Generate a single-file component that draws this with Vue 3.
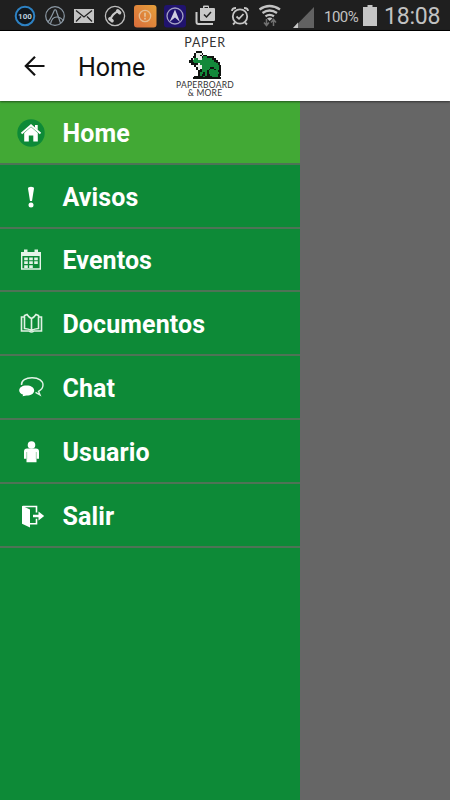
<script setup>
import { ref } from "vue"

const active = ref('home')

const items = [
  { id: 'home', label: 'Home' },
  { id: 'avisos', label: 'Avisos' },
  { id: 'eventos', label: 'Eventos' },
  { id: 'documentos', label: 'Documentos' },
  { id: 'chat', label: 'Chat' },
  { id: 'usuario', label: 'Usuario' },
  { id: 'salir', label: 'Salir' },
]

// k = black, g = green, w = white
const frog = [
  '....kkk............',
  '...kwwwk...........',
  '...kwwkwkk.........',
  '..kkwwwkggkkkk.....',
  '.kwggwwggggggkk....',
  'kkggggggggggggkk...',
  'kkkggggggggggggkk..',
  '.kkkkwggggggggggk..',
  '...kwwwggggggggggk.',
  '....kwwgggggkkgggk.',
  '....kwkggggkggkggk.',
  '.....kkgggkgggggkk.',
  '.....kggkgkggggggk.',
  '.....kgkkgkkggggkk.',
  '...kkkkkgkkkkgggk..',
  '..kkkkkkkkkkkkkkkk.',
]

const colors = { k: '#101410', g: '#13893a', w: '#e9efe9' }

const pixels = []
frog.forEach((row, y) => {
  row.split('').forEach((c, x) => {
    if(colors[c]) {
      pixels.push({ x, y, fill: colors[c] })
    }
  })
})
</script>

<template>
  <div class="screen">
    <div class="status">
      <svg class="status-icons" width="314" height="32" viewBox="0 0 314 32">
        <circle cx="25" cy="16" r="9.3" fill="#10171d" stroke="#2d82c4" stroke-width="2" />
        <text x="25" y="19" class="hundred" text-anchor="middle">100</text>

        <g fill="none" stroke="#8c99a5" stroke-width="1.2">
          <circle cx="55" cy="16" r="9.3" />
          <path d="M47.5 22c3-2 5-8 7-12 1.5-1 2 1 2.5 3l3.5 10M50.5 24c1-5 3-7 6-7s5 1 7 4" />
        </g>

        <path fill="#c4c4c4" d="M74 9h20v14H74z" />
        <path fill="none" stroke="#222" stroke-width="1.3" d="M76 10.500l8 6.500 8-6.500M76 21.500l5-5M92 21.500l-5-5" />

        <circle cx="115" cy="16" r="9.6" fill="none" stroke="#bdbdbd" stroke-width="1.3" />
        <path fill="none" stroke="#c9c9c9" stroke-width="2.2" d="M110.5 20.500c0-4 4-8.500 8.500-9" />
        <path stroke="#c9c9c9" stroke-width="3.4" stroke-linecap="round" d="M117.7 10.700l2 2M109.800 18.800l2.300 2" />

        <defs>
          <linearGradient id="orange" x1="0" y1="1" x2="1" y2="0">
            <stop offset="0" stop-color="#d96c3b" />
            <stop offset="1" stop-color="#e6a03b" />
          </linearGradient>
        </defs>
        <rect x="134" y="5" width="22.5" height="22.5" rx="3" fill="url(#orange)" />
        <circle cx="145" cy="16" r="5.7" fill="none" stroke="#e5bd93" stroke-width="1.3" />
        <path stroke="#e5bd93" stroke-width="1.8" d="M145 12.800v4M145 17.800v1.700" />

        <rect x="164" y="5" width="22" height="22.5" rx="3" fill="#20136e" />
        <circle cx="175" cy="16" r="8" fill="none" stroke="#a4a1c4" stroke-width="1.3" />
        <path fill="#cfcde0" d="M175 9.500l5 12.500-5-4.500-5.500 4.500z" />

        <path fill="#c9c9c9" fill-rule="evenodd" d="M200 8h3V6.500q0-1 1-1h4q1 0 1 1V8h5q1 0 1 1v11q0 1-1 1h-13q-1 0-1-1zM204.500 8h3.500V7h-3.500z" />
        <path fill="none" stroke="#c9c9c9" stroke-width="2" d="M196.500 12v10q0 2 2 2H213" />
        <path fill="none" stroke="#222" stroke-width="1.5" d="M204 14.500l2.500 2.500 4.500-5" />

        <g fill="none" stroke="#c6c6c6" stroke-width="1.8">
          <circle cx="240" cy="16.5" r="7.2" />
          <path d="M232 11q0-3 4-3M248 11q0-3-4-3M235 22.500l-2 2M245 22.500l2 2" />
          <path d="M236.500 16.500l2.500 2.300 4.500-4.800" />
        </g>

        <g fill="none" stroke="#c3c3c3" stroke-width="2.3">
          <path d="M259.500 9.500q10-7 20.500 0" />
          <path d="M262.500 13q7-5 14.500 0" />
          <path d="M265.500 16.300q4-3 8.500 0" />
        </g>
        <path fill="#c3c3c3" d="M267 18.300q3-1.800 5.500 0L269.700 21z" />
        <path fill="none" stroke="#707070" stroke-width="1.5" d="M266.500 19v6M264 22.500l2.500 3 2.500-3M273.500 26v-6M271 22.500l2.500-3 2.500 3" />

        <path fill="#626262" d="M314 7v21h-20.500z" />
        <path fill="#c8c8c8" d="M298 22.500V28h-5z" />
      </svg>
      <span class="percent">100%</span>
      <svg class="battery" width="14" height="22" viewBox="0 0 14 22">
        <path fill="#c5c5c5" d="M4.500 0h5v2H14v19H0V2h4.500z" />
      </svg>
      <span class="clock">18:08</span>
    </div>

    <header class="bar">
      <svg class="back" width="22" height="20" viewBox="0 0 22 20">
        <path fill="none" stroke="#111" stroke-width="2.2" d="M20.500 10H2M11 .8L1.800 10l9.200 9.200" />
      </svg>
      <h1>Home</h1>
      <div class="logo">
        <span class="logo-top">PAPER</span>
        <svg width="34" height="28" viewBox="0 0 19 16" preserveAspectRatio="none" shape-rendering="crispEdges">
          <rect v-for="(p, ix) in pixels" :key="ix" :x="p.x" :y="p.y" width="1.1" height="1.1" :fill="p.fill" />
        </svg>
        <span class="logo-text">PAPERBOARD</span>
        <span class="logo-text">&amp; MORE</span>
      </div>
    </header>

    <main>
      <nav>
        <a v-for="item in items" :key="item.id" :class="{ active: active === item.id }" @click="active = item.id">
          <svg class="icon" width="30" height="30" viewBox="0 0 30 30">
            <g v-if="item.id === 'home'">
              <circle cx="15" cy="15" r="13.7" fill="#0d8a37" />
              <path fill="none" stroke="#fff" stroke-width="1.9" d="M5.500 15.500L15 7.200l9.500 8.300" />
              <path fill="#fff" d="M19 7h2.700v5L19 9.500zM15 9l6.800 6V23.500h-4.500V17.500h-4.500v6H8.200v-8.500z" />
            </g>
            <g v-else-if="item.id === 'avisos'" fill="#fff">
              <path d="M12 6.500q0-1.700 3-1.700t3 1.700l-2 12.500h-2z" />
              <circle cx="15" cy="23" r="2.5" />
            </g>
            <g v-else-if="item.id === 'eventos'">
              <path fill="none" stroke="#e4f4e8" stroke-width="1.4" d="M5.700 8h18.600v16H5.700z" />
              <path fill="#e4f4e8" d="M5 7h20v4H5zM8 4.500h3.500v4H8zM18.500 4.500H22v4h-3.500z" />
              <path fill="none" stroke="#e4f4e8" stroke-width="2.7" stroke-dasharray="3.6 1.4" d="M8.200 13.800h13.700M8.200 17.700h13.700M8.200 21.600h8.700" />
            </g>
            <g v-else-if="item.id === 'documentos'" fill="none" stroke="#e0f2e4" stroke-width="1.6">
              <path d="M15.500 21.500V9.500q-2.500-1-4.500-4L8.500 6.500v13q4 .3 7 2 3-1.700 7-2v-13L20 5.500q-2 3-4.500 4" />
              <path d="M8 8H5.500v14h7.500q2.500 2 5 0h7.500V8H23" />
            </g>
            <g v-else-if="item.id === 'chat'">
              <path fill="none" stroke="#e4f4e8" stroke-width="1.4" d="M5.500 12C5 7.500 10 4.700 16 4.700c7 0 11 3.300 11 7.300 0 3-2 5-4.500 6.300l1.500 3.500-4.500-2.500" />
              <path fill="#fff" d="M10.500 12.500c4.500 0 7.700 2 7.700 5s-3.200 5-7.700 5l-4 .8.700-1.600c-2.500-1-4-2.200-4-4.200 0-3 3-5 7.300-5z" />
            </g>
            <g v-else-if="item.id === 'usuario'" fill="#fff">
              <circle cx="15.5" cy="8" r="3.8" />
              <path d="M11 11.500h9q3 0 3 3v7.200h-2.500v3.500h-10v-3.500H8v-7.200q0-3 3-3z" />
              <path stroke="#7cc38e" stroke-width=".7" d="M10.700 15v7M20.300 15v7" />
            </g>
            <g v-else fill="#fff">
              <path d="M6 4.800l8 3.700v18l-8-3.700z" />
              <path fill="none" stroke="#fff" stroke-width="1.6" d="M7 5.500h13.500v6M14 22.700h6.500v-5" />
              <path d="M17 13.700h5.500V10.500l5.700 4.500-5.700 4.500v-3.200H17z" />
            </g>
          </svg>
          <span>{{ item.label }}</span>
        </a>
      </nav>
      <div class="overlay"></div>
    </main>
  </div>
</template>

<style>
body {
  margin: 0;
}
</style>

<style scoped>
.screen {
  width: 450px;
  height: 800px;
  display: flex;
  flex-direction: column;
  overflow: hidden;
  font-family: Roboto, "Liberation Sans", sans-serif;
}

.status {
  flex: none;
  height: 31px;
  box-sizing: border-box;
  display: flex;
  align-items: flex-start;
  background: #1f1f1f;
  border-bottom: 1px solid #000;
  color: #c2c2c2;
  white-space: nowrap;
}

.status-icons {
  flex: none;
}

.hundred {
  font-size: 8px;
  font-weight: 700;
  fill: #b9cfdf;
}

.percent {
  width: 49px;
  box-sizing: border-box;
  padding-left: 10px;
  font-size: 15px;
  line-height: 34px;
  letter-spacing: -.5px;
}

.battery {
  margin-top: 5px;
}

.clock {
  margin-left: 7px;
  font-size: 23px;
  line-height: 33px;
  letter-spacing: -.2px;
}

.bar {
  flex: none;
  height: 70px;
  display: flex;
  align-items: center;
  background: #fff;
  position: relative;
  z-index: 1;
  box-shadow: 0 1px 2px rgba(0, 0, 0, .5);
}

.back {
  margin-left: 24px;
}

h1 {
  width: 94px;
  margin: 2px 0 0 32px;
  font-size: 25px;
  font-weight: 400;
  color: #111;
}

.logo {
  width: 66px;
  height: 66px;
  display: flex;
  flex-direction: column;
  align-items: center;
  color: #333;
  font-family: Lato, sans-serif;
}

.logo-top {
  font-size: 12.5px;
  line-height: 14px;
  letter-spacing: .7px;
  margin-top: 3px;
}

.logo svg {
  flex: none;
  margin: 1px 0 3px 2px;
}

.logo-text {
  font-size: 8.5px;
  line-height: 7.5px;
  letter-spacing: .25px;
  white-space: nowrap;
}

main {
  flex: 1;
  display: flex;
}

nav {
  width: 300px;
  background: #0d8a37;
}

nav a {
  display: flex;
  align-items: center;
  height: 63.8px;
  box-sizing: border-box;
  border-bottom: 2px solid #4e7356;
  padding: 2px 0 0 16px;
  color: #fff;
  font-size: 25px;
  font-weight: 700;
  letter-spacing: .1px;
  cursor: pointer;
}

nav a.active {
  background: #42a935;
}

nav a span {
  margin: 1px 0 0 16.5px;
}

.overlay {
  flex: 1;
  background: #666;
}
</style>
